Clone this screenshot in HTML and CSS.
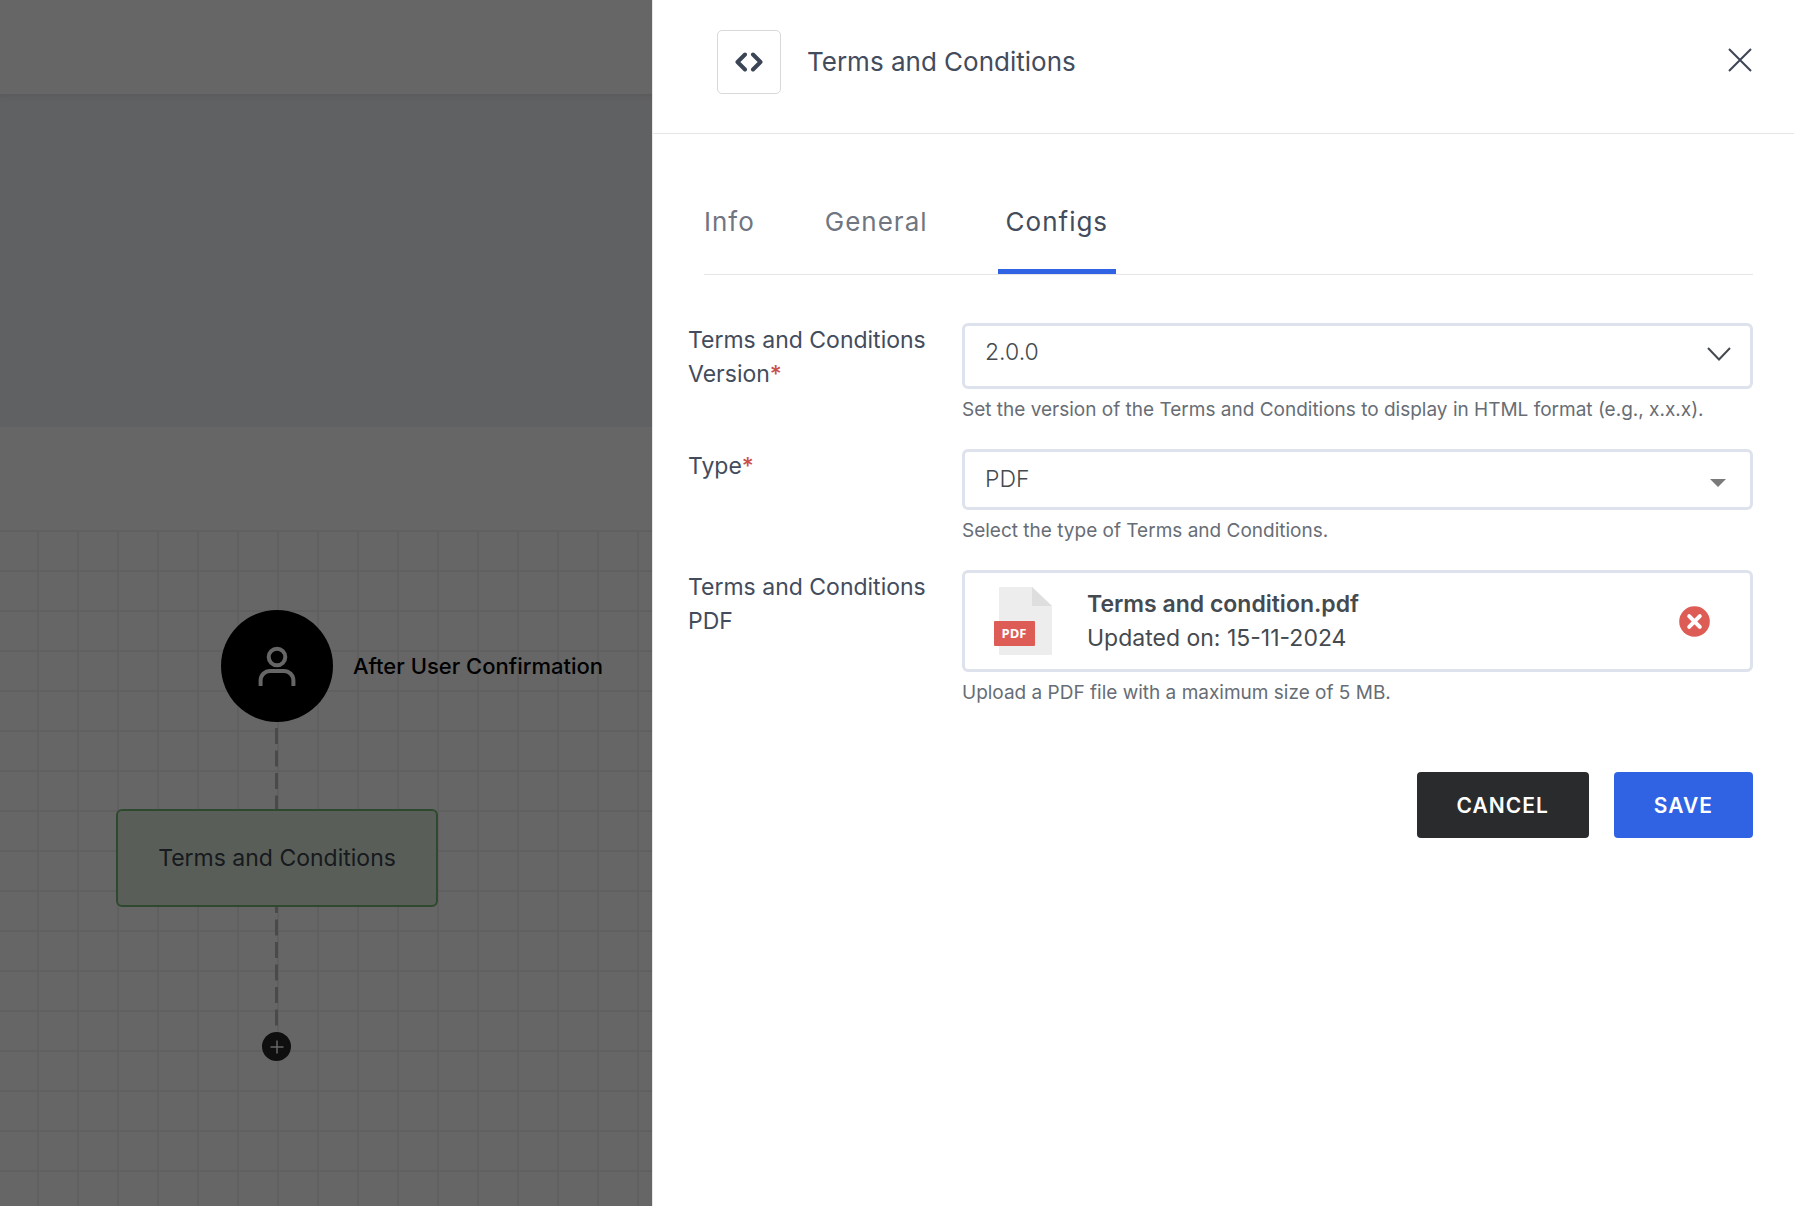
FILE: index.html
```html
<!DOCTYPE html>
<html lang="en">
<head>
<meta charset="utf-8">
<title>Terms and Conditions</title>
<link rel="stylesheet" href="styles.css">
</head>
<body>
<div class="app">
  <div class="topbar"></div>
  <div class="banner"></div>
  <div class="toolbar"></div>
  <main class="canvas">
    <svg class="edge edge-start" width="3" height="84" aria-hidden="true"><line x1="1.5" y1="0" x2="1.5" y2="84"/></svg>
    <svg class="edge edge-end" width="3" height="129" aria-hidden="true"><line x1="1.5" y1="0" x2="1.5" y2="129"/></svg>
    <div class="start-node">
      <span class="start-icon">
        <svg width="40" height="40" viewBox="0 0 40 40" aria-hidden="true"><circle cx="20" cy="11" r="8.3"/><path d="M3.6 39v-4.500a9.500 9.500 0 0 1 9.500-9.500h13.800a9.500 9.500 0 0 1 9.500 9.500V39"/></svg>
      </span>
      <span class="start-label">After User Confirmation</span>
    </div>
    <div class="step-node">Terms and Conditions</div>
    <button class="add-node" type="button" aria-label="Add step">
      <svg width="14" height="14" viewBox="0 0 14 14" aria-hidden="true"><path d="M7 .5v13M.5 7h13"/></svg>
    </button>
  </main>
</div>
<div class="scrim"></div>

<aside class="drawer">
  <header class="drawer-header">
    <span class="drawer-icon">
      <svg width="30" height="20" viewBox="0 0 30 20" aria-hidden="true"><path d="M11 2.500 3.500 10l7.500 7.500M19 2.500 26.500 10 19 17.500"/></svg>
    </span>
    <h1 class="drawer-title">Terms and Conditions</h1>
    <button class="close" type="button" aria-label="Close">
      <svg width="24" height="24" viewBox="0 0 24 24" aria-hidden="true"><path d="M1 1l22 22M23 1 1 23"/></svg>
    </button>
  </header>

  <nav class="tabs">
    <button class="tab" type="button">Info</button>
    <button class="tab" type="button">General</button>
    <button class="tab tab-active" type="button">Configs</button>
  </nav>

  <form class="form">
    <div class="row">
      <label class="label" for="version">Terms and Conditions Version<span class="required">*</span></label>
      <div class="field">
        <div class="control">
          <select class="select select-version" id="version"><option>2.0.0</option></select>
          <svg class="chevron" width="24" height="14" viewBox="0 0 24 14" aria-hidden="true"><path d="M1 1l11 11.500L23 1"/></svg>
        </div>
        <p class="hint">Set the version of the Terms and Conditions to display in HTML format (e.g., x.x.x).</p>
      </div>
    </div>
    <div class="row">
      <label class="label" for="type">Type<span class="required">*</span></label>
      <div class="field">
        <div class="control">
          <select class="select" id="type"><option>PDF</option></select>
          <svg class="caret" width="16" height="8" viewBox="0 0 16 8" aria-hidden="true"><path d="M0 0h16L8 8z"/></svg>
        </div>
        <p class="hint">Select the type of Terms and Conditions.</p>
      </div>
    </div>
    <div class="row">
      <span class="label">Terms and Conditions PDF</span>
      <div class="field">
        <div class="file">
          <svg class="file-icon" width="58" height="68" viewBox="0 0 58 68" aria-hidden="true">
            <path fill="#ededed" d="M6 0h32l20 19v48a1 1 0 0 1-1 1H6a1 1 0 0 1-1-1V1a1 1 0 0 1 1-1z"/>
            <path fill="#dedede" d="M38 0l20 19H38z"/>
            <rect fill="#de5c56" y="34" width="41" height="25" rx="1"/>
            <text class="file-badge" x="20" y="51" text-anchor="middle">PDF</text>
          </svg>
          <div class="file-text">
            <strong class="file-name">Terms and condition.pdf</strong>
            <span>Updated on: 15-11-2024</span>
          </div>
          <button class="remove" type="button" aria-label="Remove file">
            <svg width="31" height="31" viewBox="0 0 31 31" aria-hidden="true"><circle cx="15.500" cy="15.500" r="15.300"/><path d="M10.200 10.200l10.600 10.600M20.800 10.200 10.200 20.800"/></svg>
          </button>
        </div>
        <p class="hint">Upload a PDF file with a maximum size of 5 MB.</p>
      </div>
    </div>
    <div class="actions">
      <button class="btn btn-dark" type="button">CANCEL</button>
      <button class="btn btn-primary" type="submit">SAVE</button>
    </div>
  </form>
</aside>
</body>
</html>
```

FILE: styles.css
```css
*, *::before, *::after { box-sizing: border-box; }

body {
  margin: 0;
  font-family: Inter, "Liberation Sans", sans-serif;
  font-size: 23px;
  color: #454a50;
}

button, select { font: inherit; color: inherit; }
button { border: 0; padding: 0; background: none; cursor: pointer; }
svg { display: block; fill: none; }
h1, p { margin: 0; font-weight: 400; }

/* Workflow page behind the drawer */
.app {
  display: flex;
  flex-direction: column;
  height: 100vh;
  background: #fff;
}
.topbar { height: 94px; }
.banner {
  height: 333px;
  background: #f0f2f5;
  box-shadow: inset 0 8px 8px -8px rgba(0, 0, 40, .12);
}
.toolbar { height: 103px; }
.canvas {
  flex: 1;
  position: relative;
  overflow: hidden;
  background-image:
    linear-gradient(90deg, #f0f0f0 2px, transparent 2px),
    linear-gradient(#f0f0f0 2px, transparent 2px);
  background-size: 40px 40px;
  background-position: -3px 0;
}
.edge { position: absolute; left: 275px; }
.edge line { stroke: #b8b8b8; stroke-width: 3; stroke-dasharray: 16 6.5; }
.edge-start { top: 198px; }
.edge-end { top: 367px; }
.start-node {
  position: absolute;
  left: 221px;
  top: 80px;
  display: flex;
  align-items: center;
  gap: 20px;
}
.start-icon {
  display: grid;
  place-items: center;
  width: 112px;
  height: 112px;
  border-radius: 50%;
  background: #000;
}
.start-icon svg { stroke: #fff; stroke-width: 4; stroke-linecap: round; }
.start-label { font-size: 22px; font-weight: 500; color: #000; white-space: nowrap; }
.step-node {
  position: absolute;
  left: 116px;
  top: 279px;
  display: grid;
  place-items: center;
  width: 322px;
  height: 98px;
  border: 2px solid #73b673;
  border-radius: 6px;
  background: #dfeddb;
  color: #3a414c;
}
.add-node {
  position: absolute;
  left: 262px;
  top: 502px;
  display: grid;
  place-items: center;
  width: 29px;
  height: 29px;
  border-radius: 50%;
  background: #262626;
}
.add-node svg { stroke: #fff; stroke-width: 1.5; }

.scrim {
  position: fixed;
  inset: 0;
  background: rgba(0, 0, 0, .6);
}

/* Drawer */
.drawer {
  position: fixed;
  inset: 0 0 0 652px;
  overflow-y: auto;
  border-left: 1px solid #e6e6e6;
  background: #fff;
}
.drawer-header {
  display: flex;
  align-items: center;
  height: 134px;
  padding: 0 42px 10px 64px;
  border-bottom: 1px solid #e6e6e6;
  color: #434c5c;
}
.drawer-icon {
  display: grid;
  place-items: center;
  width: 64px;
  height: 64px;
  margin-right: 26px;
  border: 1px solid #d9d9d9;
  border-radius: 5px;
}
.drawer-icon svg { stroke: #3c4555; stroke-width: 4; stroke-linecap: round; stroke-linejoin: round; }
.drawer-title { flex: 1; font-size: 26px; }
.close { padding-bottom: 4px; }
.close svg { stroke: #3d4453; stroke-width: 2; }

.tabs {
  display: flex;
  gap: 62px;
  margin: 54px 41px 0 51px;
  border-bottom: 1px solid #e5e5e5;
}
.tab {
  height: 86px;
  padding: 0 8px 14px;
  border-bottom: 5px solid transparent;
  font-size: 26px;
  letter-spacing: 1px;
  color: #70767f;
}
.tab:first-child { padding-left: 0; padding-right: 0; }
.tab-active { border-bottom-color: #3063e4; color: #434c5c; }

.form { padding: 48px 41px 48px 35px; }
.row {
  display: grid;
  grid-template-columns: 274px 1fr;
}
.label { width: 250px; line-height: 34px; color: #434c5c; }
.required { font-weight: 500; color: #c9504a; }
.control { position: relative; }
.select, .file {
  display: block;
  width: 100%;
  border: 3px solid #dde2ec;
  border-radius: 6px;
  background: #fff;
}
.select {
  height: 61px;
  padding: 0 60px 2px 20px;
  appearance: none;
  font-weight: 300;
}
.select-version { height: 66px; padding-bottom: 8px; }
.chevron { position: absolute; right: 22px; top: 24px; stroke: #454a50; stroke-width: 2; }
.caret { position: absolute; right: 27px; top: 30px; fill: #7a7a7a; }
.hint {
  padding: 7px 0 25px;
  font-size: 19px;
  line-height: 28px;
  color: #676d75;
}
.file {
  display: flex;
  align-items: center;
  height: 102px;
  padding: 0 40px 0 29px;
}
.file-badge { fill: #fff; font: 700 13px "Open Sans", sans-serif; }
.file-text {
  display: flex;
  flex-direction: column;
  flex: 1;
  margin-left: 35px;
  line-height: 34px;
}
.file-name { font-weight: 600; }
.remove circle { fill: #de5c56; }
.remove path { stroke: #fff; stroke-width: 4; stroke-linecap: round; }

.actions {
  display: flex;
  justify-content: flex-end;
  gap: 25px;
  padding-top: 40px;
}
.btn {
  height: 66px;
  padding: 0 40px;
  border-radius: 4px;
  font-size: 21px;
  font-weight: 600;
  letter-spacing: 1px;
  color: #fff;
}
.btn-dark { background: #2a2b2d; }
.btn-primary { background: #3063e4; }
```
